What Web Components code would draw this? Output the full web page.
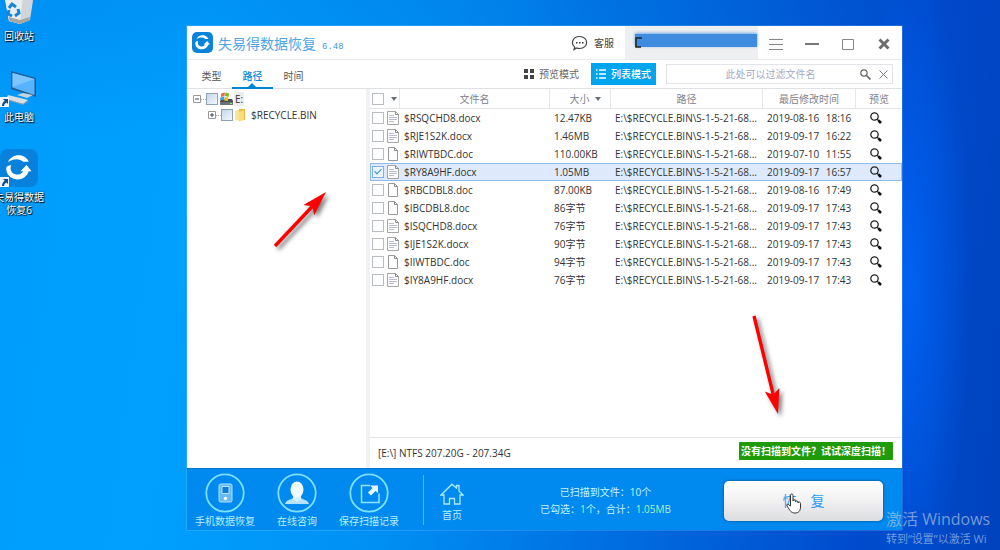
<!DOCTYPE html>
<html lang="zh-CN">
<head>
<meta charset="utf-8">
<title>失易得数据恢复</title>
<style>
html, body { margin: 0; height: 100%; overflow: hidden; }
body { font: 10px/18px "Open Sans", "Noto Sans CJK SC", sans-serif; color: #333; }
</style>
</head>
<body>
<desk-top>
  <desktop-icon kind="bin" style="top:-6px">回收站</desktop-icon>
  <desktop-icon kind="pc" style="top:69px">此电脑</desktop-icon>
  <desktop-icon kind="app" style="top:149px">失易得数据<br>恢复6</desktop-icon>
  <app-window>
    <title-bar slot="title"></title-bar>
    <tab-bar slot="tabs"></tab-bar>
    <list-tools slot="tools"></list-tools>
    <folder-tree slot="side"></folder-tree>
    <file-table slot="main"></file-table>
    <status-bar slot="main"></status-bar>
    <action-bar slot="foot"></action-bar>
  </app-window>
  <red-arrow style="left:264px;top:182px" x1="11" y1="64" x2="62" y2="10"></red-arrow>
  <red-arrow style="left:744px;top:306px" x1="10" y1="10" x2="34" y2="108"></red-arrow>
  <activation-note></activation-note>
</desk-top>
<script>
const define = (name, html, init) => customElements.define(name, class extends HTMLElement {
  constructor() {
    super();
    this.attachShadow({ mode: 'open' }).innerHTML = html;
  }
  connectedCallback() {
    if (init && !this.ready) { this.ready = true; init.call(this, this.shadowRoot); }
  }
});

const base = `<style>
*{box-sizing:border-box}
button,input{font:inherit;color:inherit;margin:0;padding:0;border:0;background:none;outline:0}
button{display:flex;align-items:center;justify-content:center}
svg{display:block;flex:none}
input[type=checkbox]{appearance:none;flex:none;display:block;width:12px;height:12px;border:1px solid #b9bcc0;background:#fff}
</style>`;

const logoRing = `<path d="M3.500 8.500C5.500 3.500 11 1 16.500 2.500c3 1 5 3 6 5.500h-5C14 4.500 8 5 3.500 8.500z"/><path d="M2 13.500C1.500 19 6 24 12 24c5 0 9-3 10.500-7.500H25L20.500 11 15 16.500h2.500C16 19 13.500 20 11 19.500 7 19 5 15.500 6.500 11 4 11.500 2.500 12 2 13.500z"/>`;

define('desk-top', base + `<style>
:host{display:block;position:relative;height:100%;overflow:hidden;
background:radial-gradient(ellipse 60px 330px at 91% 52%,rgba(0,105,255,.75),rgba(0,90,240,0)),
linear-gradient(180deg,rgba(0,60,190,.12),transparent 25%),
linear-gradient(98deg,#009cfc 0,#00a0ff 20%,#0090f4 42%,#0069de 67%,#004cce 86%,#0042bd 100%)}
</style><slot></slot>`);

const deskArt = {
  bin: `<svg width="38" height="32" viewBox="0 0 38 32"><path d="M4 0h30l-4 26-10 4-11-3z" fill="#cfd5d9"/><path d="M4 0h19l-3 30-11-3z" fill="#e8edf0"/><path d="M9 23l11 3 10-3-.5 3.500L20 30 9.500 27z" fill="#a9a5a0"/><g fill="none" stroke="#1685d6" stroke-width="3"><path d="M9 14l3-4 4 3"/><path d="M18 15l1 4-4 3"/><path d="M12 22l-4-2 1-4"/></g></svg>`,
  pc: `<svg width="38" height="38" viewBox="0 0 38 38"><path d="M11 2l25 7v19L11 20z" fill="#245b8d"/><path d="M12.500 4L34.500 10v16L12.500 18.500z" fill="#57b2ff"/><path d="M12.500 4L34.500 10 12.500 18z" fill="#7cc5ff"/><path d="M17 26l6-2 10 2-6 3z" fill="#c6d4dd"/><path d="M8 26l20 5-5 4-17-5z" fill="#d9dee2"/><path d="M6 30l17 5 5-3v1l-5 3-17-5z" fill="#8d9aa5"/></svg>`,
  app: `<svg width="38" height="38" viewBox="0 0 38 38"><rect width="38" height="38" rx="8" fill="#0781dc"/><g fill="#fff" transform="translate(4 4) scale(1.1)">${logoRing}</g></svg>`
};
define('desktop-icon', base + `<style>
:host{position:absolute;left:-8px;width:54px;display:flex;flex-direction:column;align-items:center;
color:#fff;line-height:13px;text-align:center;text-shadow:1px 1px 1px #000,0 0 2px #023}
.art{position:relative;margin-bottom:4px}
.short{position:absolute;left:0;bottom:0}
</style><div class="art"></div><div><slot></slot></div>`, function (root) {
  const kind = this.getAttribute('kind');
  const shortcut = kind === 'bin' ? '' : `<svg class="short" width="9" height="10" viewBox="0 0 9 10"><path d="M0 0h9v10H0z" fill="#eef5fb"/><path d="M3 2h5v5L6.500 5.500C5 6.500 4 7.500 4 9H2C2 6.500 3 5 4.700 3.700z" fill="#174b8e"/></svg>`;
  root.querySelector('.art').innerHTML = deskArt[kind] + shortcut;
});

define('app-window', base + `<style>
:host{position:absolute;left:187px;right:98px;top:26px;bottom:20px;display:flex;flex-direction:column;background:#fff;box-shadow:0 0 1px #bfeaff}
.bar{display:flex;flex:none;height:29px;border-bottom:1px solid #dfe1e4}
.bar ::slotted([slot=tools]){flex:1}
.body{flex:1;display:flex;min-height:0}
.side{flex:none;width:183px;border-right:4px solid #f0f1f3}
.main{flex:1;min-width:0;display:flex;flex-direction:column}
</style><slot name="title"></slot>
<div class="bar"><slot name="tabs"></slot><slot name="tools"></slot></div>
<div class="body"><div class="side"><slot name="side"></slot></div><div class="main"><slot name="main"></slot></div></div>
<slot name="foot"></slot>`);

define('title-bar', base + `<style>
:host{display:flex;flex:none;align-items:center;height:33px;border-bottom:1px solid #e9eaec;padding:0 0 0 5px}
h1{font:14px/20px "Noto Sans CJK SC",sans-serif;color:#4fa5e4;margin:0 0 0 5px}
.ver{font:9px/10px "Liberation Mono",monospace;color:#3d9be0;margin:8px 0 0 6px}
.help{margin-left:auto;gap:6px;color:#444}
.account{align-self:stretch;width:133px;margin-left:11px;background:#eeeff0;padding:8px 1px 0 10px}
.mask{position:relative;height:13px;background:#3f8be0;box-shadow:0 -1px 3px #6ea8e8}
.mask svg{position:absolute;left:0;top:3px}
.ctl{width:36px;height:32px;color:#777}
.ctl svg{margin-top:3px}
</style>
<svg width="21" height="21" viewBox="0 0 21 21"><rect width="21" height="21" rx="5" fill="#0a84d8"/><g fill="#fff" transform="translate(2 2) scale(.64)">${logoRing}</g></svg>
<h1>失易得数据恢复</h1><span class="ver">6.48</span>
<button class="help"><svg width="17" height="16" viewBox="0 0 17 16"><path d="M3.800 12.200C-.8 8.500 1.800 1.500 8.500 1.500c9.500 0 9.500 12 0 12-1 0-2-.2-2.700-.5L3 14.500z" fill="none" stroke="#444" stroke-width="1.200"/><path d="M5 7h1.500v1.500H5zM8 7h1.500v1.500H8zM11 7h1.500v1.500H11z" fill="#333"/></svg>客服</button>
<div class="account"><div class="mask"><svg width="8" height="11" viewBox="0 0 8 11"><path d="M7 1H1v9h5" fill="none" stroke="#222" stroke-width="1.500"/><path d="M2 2h6v6H2z" fill="#3f8be0"/></svg></div></div>
<button class="ctl" aria-label="菜单"><svg width="14" height="11" viewBox="0 0 14 11"><path d="M0 .5h14M0 5.500h14M0 10.500h14" stroke="#858585"/></svg></button>
<button class="ctl" aria-label="最小化"><svg width="14" height="10" viewBox="0 0 14 10"><path d="M0 5h14" stroke="#777" stroke-width="2"/></svg></button>
<button class="ctl" aria-label="最大化"><svg width="12" height="11" viewBox="0 0 12 11"><path d="M.5.500h11v10H.5z" fill="none" stroke="#888"/></svg></button>
<button class="ctl" aria-label="关闭"><svg width="12" height="12" viewBox="0 0 12 12"><path d="M1.500 1.500l9 9M10.500 1.500l-9 9" stroke="#6d6d6d" stroke-width="3"/></svg></button>`);

define('tab-bar', base + `<style>
:host{display:flex;flex:none;padding-left:4px}
button{position:relative;width:41px;height:29px;padding-top:2px;color:#555}
button[aria-selected=true]{color:#0086dc;font-weight:500;border-bottom:2px solid #0086cf;padding-top:4px}
button[aria-selected=true]::after{content:"";position:absolute;left:16px;bottom:0;border:4px solid transparent;border-top:0;border-bottom-color:#0086cf}
</style><button role="tab">类型</button><button role="tab" aria-selected="true">路径</button><button role="tab">时间</button>`);

define('list-tools', base + `<style>
:host{display:flex;align-items:center;justify-content:flex-end;padding-right:9px}
.mode{gap:5px;height:22px;color:#666}
.on{width:65px;margin:0 10px 0 12px;background:#00a5ee;color:#fff;font-weight:500}
.search{display:flex;align-items:center;width:227px;height:20px;border:1px solid #e2e4ea}
input{flex:1;min-width:0;height:18px;padding-left:18px;text-align:center}
input::placeholder{color:#a3aac6;opacity:1}
.search button{width:18px;height:18px}
</style>
<button class="mode"><svg width="10" height="10" viewBox="0 0 10 10"><path d="M0 0h4v4H0zM6 0h4v4H6zM0 6h4v4H0zM6 6h4v4H6z" fill="#444"/></svg>预览模式</button>
<button class="mode on"><svg width="10" height="10" viewBox="0 0 10 10"><path d="M3 1h7M3 5h7M3 9h7M0 1h1.500M0 5h1.500M0 9h1.500" stroke="#fff" stroke-width="1.300"/></svg>列表模式</button>
<div class="search"><input type="text" placeholder="此处可以过滤文件名" aria-label="过滤文件名">
<button aria-label="搜索"><svg width="11" height="11" viewBox="0 0 11 11"><circle cx="4" cy="4" r="3.200" fill="none" stroke="#666" stroke-width="1.200"/><path d="M6.500 6.500l4 4" stroke="#666" stroke-width="1.600"/></svg></button>
<button aria-label="清除"><svg width="9" height="9" viewBox="0 0 9 9"><path d="M.5.500l8 8M8.500.500l-8 8" stroke="#777"/></svg></button></div>`);

define('folder-tree', base + `<style>
:host{display:block;padding:2px 0 0 6px}
ul{list-style:none;margin:0;padding:0}
ul ul{padding-left:15px}
.row{display:flex;align-items:center;height:16px}
.exp{position:relative;width:8px;height:8px;margin-right:5px}
.exp::after{content:"";position:absolute;left:8px;top:4px;width:5px;border-top:1px dotted #aaa}
input[type=checkbox]{border-color:#8fa3b5;background:linear-gradient(135deg,#c4d6ea,#f4f8fc)}
label{display:flex;align-items:center;gap:1px}
.name{padding:0 1px;line-height:14px}
.cur{background:#ededee}
ul ul .name{margin-left:3px}
</style>
<ul><li><div class="row"><button class="exp" aria-label="收起"><svg width="8" height="8" viewBox="0 0 8 8"><path d="M.5.500h7v7h-7z" fill="#fff" stroke="#999"/><path d="M2 4h4" stroke="#445"/></svg></button>
<label><input type="checkbox"><svg width="14" height="14" viewBox="0 0 14 14"><path d="M2 8l3-1h8l1 2v4H1V9z" fill="#4c4f55"/><path d="M1 10h13v3H1z" fill="#6b7378"/><path d="M2 1.500L6 .5 5.500 4 2 5z" fill="#e8703c"/><path d="M6.500.500L10 1.500 9.500 5 6 4z" fill="#77b935"/><path d="M1.500 5.500l4-1L5 8H1z" fill="#39a0e5"/><path d="M6 5l3.500.700L9 9l-4-.5z" fill="#f5bb23"/><path d="M11 11h2v1h-2z" fill="#6f6"/></svg><span class="name cur">E:</span></label></div>
<ul><li><div class="row"><button class="exp" aria-label="展开"><svg width="8" height="8" viewBox="0 0 8 8"><path d="M.5.500h7v7h-7z" fill="#fff" stroke="#999"/><path d="M2 4h4M4 2v4" stroke="#445"/></svg></button>
<label><input type="checkbox"><svg width="12" height="14" viewBox="0 0 12 14"><path d="M1 3l5-2v12l-5-1z" fill="#fbe49a"/><path d="M5 1l6 0v11H6z" fill="#e9b83f"/><path d="M5 4l5-2v10l-5 1.500z" fill="#f8dc80"/></svg><span class="name">$RECYCLE.BIN</span></label></div></li></ul></li></ul>`);

const files = [
  ['$RSQCHD8.docx', '12.47KB', '2019-08-16', '18:16'],
  ['$RJE1S2K.docx', '1.46MB', '2019-09-17', '16:22'],
  ['$RIWTBDC.doc', '110.00KB', '2019-07-10', '11:55'],
  ['$RY8A9HF.docx', '1.05MB', '2019-09-17', '16:57', true],
  ['$RBCDBL8.doc', '87.00KB', '2019-08-16', '17:49'],
  ['$IBCDBL8.doc', '86字节', '2019-09-17', '17:43'],
  ['$ISQCHD8.docx', '76字节', '2019-09-17', '17:43'],
  ['$IJE1S2K.docx', '90字节', '2019-09-17', '17:43'],
  ['$IIWTBDC.doc', '94字节', '2019-09-17', '17:43'],
  ['$IY8A9HF.docx', '76字节', '2019-09-17', '17:43']
];
const docxIcon = `<svg width="12" height="14" viewBox="0 0 12 14"><path d="M.5.500h8l3 3v10H.5z" fill="#fdfdfd" stroke="#a6a6a6"/><path d="M8.500.500v3h3" fill="none" stroke="#888"/><path d="M2 4.500h5M2 6.500h8M2 8.500h8M2 10.500h5" stroke="#b9bccb"/></svg>`;
const docIcon = `<svg width="12" height="14" viewBox="0 0 12 14"><path d="M1.500.500h6l3 3v10h-9z" fill="#fdfdfd" stroke="#999"/><path d="M7.500.500v3h3" fill="none" stroke="#888"/></svg>`;
const glass = `<svg width="12" height="12" viewBox="0 0 12 12"><circle cx="4.500" cy="4.500" r="3.700" fill="none" stroke="#222" stroke-width="1.300"/><path d="M7.200 7.200l1.500 1.500" stroke="#222" stroke-width="1.400"/><path d="M8.500 8.500l2.500 2.500" stroke="#111" stroke-width="2.600"/></svg>`;

define('file-table', base + `<style>
:host{display:block;flex:1;min-height:0;overflow:hidden}
table{width:100%;border-collapse:separate;border-spacing:0;table-layout:fixed}
col.c{width:30px} col.s{width:61px} col.p{width:152px} col.t{width:93px} col.v{width:46px}
th{height:20px;padding:0;font-weight:400;color:#80838a;border-right:1px solid #e6e8ea;border-bottom:1px solid #e2e4e6;line-height:18px}
th:last-child{border-right:0}
td{height:18px;padding:0 0 0 4px;line-height:16px;white-space:nowrap;border:0 solid #8ebbea}
.pick{display:flex;align-items:center;gap:3px;padding-left:2px}
th .pick{gap:7px}
td.k{padding:0}
.tri{width:0;height:0;border:3px solid transparent;border-top:4px solid #687078;border-bottom:0}
th button{gap:5px;width:100%;padding-left:10px}
td button{width:100%}
td.g{padding:0;padding-right:6px}
time{margin-right:4px}
tr.sel td{background:#deeafb;border-width:1px 0}
tr.sel .pick{padding-left:1px}
tr.sel td:first-child{border-left-width:1px}
tr.sel td:last-child{border-right-width:1px;padding-right:5px}
input:checked{border-color:#7fb2e4;background:#eaf4fe;position:relative}
input:checked::after{content:"";position:absolute;left:3px;top:0;width:3px;height:6px;border:solid #3292e0;border-width:0 1px 1px 0;transform:rotate(45deg)}
</style>
<table><colgroup><col class="c"><col><col class="s"><col class="p"><col class="t"><col class="v"></colgroup>
<thead><tr><th><div class="pick"><input type="checkbox" aria-label="全选"><span class="tri"></span></div></th><th>文件名</th><th><button>大小<span class="tri"></span></button></th><th>路径</th><th>最后修改时间</th><th>预览</th></tr></thead><tbody></tbody></table>`, function (root) {
  root.querySelector('tbody').innerHTML = files.map(([name, size, day, hour, on]) => `<tr${on ? ' class="sel"' : ''}>
<td class="k"><div class="pick"><input type="checkbox" aria-label="${name}"${on ? ' checked' : ''}>${name.endsWith('x') ? docxIcon : docIcon}</div></td>
<td>${name}</td><td>${size}</td><td>E:\\$RECYCLE.BIN\\S-1-5-21-68...</td><td><time>${day}</time> ${hour}</td>
<td class="g"><button aria-label="预览 ${name}">${glass}</button></td></tr>`).join('');
});

define('status-bar', base + `<style>
:host{display:flex;flex:none;align-items:center;justify-content:space-between;height:30px;border-top:1px solid #e2e4e6;padding:0 9px 0 8px}
button{height:18px;width:154px;margin-bottom:4px;border-radius:1px;background:#1f9a08;color:#fff;font-weight:700;white-space:nowrap}
</style><span>[E:\\] NTFS 207.20G - 207.34G</span><button>没有扫描到文件？试试深度扫描！</button>`);

define('action-bar', base + `<style>
:host{display:flex;flex:none;height:61px;background:#0089ef;border-top:1px solid #0679cc;color:#b5efff;padding:0 19px 0 2px}
.act{flex:none;flex-direction:column;justify-content:flex-start;width:72px;padding-top:4px;line-height:16px}
.home{width:56px;padding-top:14px;line-height:20px}
.sep{flex:none;width:1px;height:50px;margin:6px 0 0 18px;background:#4fb8f8}
.stats{flex:1;padding:15px 0 0 7px;text-align:center;line-height:17px;color:#c4f4ff}
.stats div{white-space:nowrap}
b{font-weight:400;color:#a8efc4}
.go{position:relative;flex:none;width:159px;height:40px;margin-top:12px;border-radius:5px;background:linear-gradient(#fff,#f4f4f5 40%,#dcdde0);box-shadow:0 0 2px 1px #0669b5;font-size:14px;color:#2f9bee}
.go svg{position:absolute;left:62px;top:12px}
</style>
<button class="act"><svg width="40" height="40" viewBox="0 0 40 40"><circle cx="20" cy="20" r="18.700" fill="none" stroke="#7fe0fd" stroke-width="1.800"/><rect x="14" y="11" width="13" height="18" rx="1.500" fill="#6ab8f5" stroke="#a6e6ff"/><path d="M17 13.500h7v7h-7z" fill="#0e7fd8" stroke="#d3f4ff" stroke-width=".8"/><circle cx="20.500" cy="25.500" r="1.700" fill="#fff"/></svg>手机数据恢复</button>
<button class="act"><svg width="40" height="40" viewBox="0 0 40 40"><circle cx="20" cy="20" r="18.700" fill="none" stroke="#7fe0fd" stroke-width="1.800"/><path d="M8 31c1-4 5-4 8-6h8c3 2 7 2 8 6z" fill="#b5e2ff"/><path d="M16 23h8v3l-4 3-4-3z" fill="#d8f1ff"/><ellipse cx="20" cy="16.500" rx="6.500" ry="8" fill="#f0faff"/></svg>在线咨询</button>
<button class="act"><svg width="40" height="40" viewBox="0 0 40 40"><circle cx="20" cy="20" r="18.700" fill="none" stroke="#7fe0fd" stroke-width="1.800"/><path d="M21 12.500h-8.500v17H30v-9" fill="none" stroke="#8fe6ff" stroke-width="1.500"/><path d="M21 12.500h8V20l-2.500-2-4.500 4.500-3-3 4.500-4.500z" fill="#e6f9ff"/></svg>保存扫描记录</button>
<div class="sep"></div>
<button class="act home"><svg width="24" height="22" viewBox="0 0 24 22"><path d="M12 1.200L16.500 5V2.500h2.500V8l4 4h-3v9h-5.500v-5.500h-5V21H4v-9H1z" fill="none" stroke="#a8ecff" stroke-width="1.300"/></svg>首页</button>
<div class="stats"><div>已扫描到文件：10个</div><div>已勾选：<b>1</b>个，合计：<b>1.05MB</b></div></div>
<button class="go">恢　复<svg width="16" height="21" viewBox="0 0 16 21"><path d="M4.500 13V2.500C4.500.500 7 .5 7 2.500V8c0-1.500 2.500-1.500 2.500 0V9c0-1.500 2.500-1.500 2.500 0v1c0-1.500 2.500-1.300 2.500.5V14c0 4-2 6-5.500 6-4 0-4.500-2-8-7-.7-1.500 1-2.500 2-1z" fill="#fff" stroke="#333"/></svg></button>`);

define('red-arrow', base + `<style>
:host{position:absolute;display:block;pointer-events:none}
svg{overflow:visible;filter:drop-shadow(3px 3px 2px rgba(0,0,0,.5))}
</style><svg width="70" height="120"><g fill="#fe0000"></g></svg>`, function (root) {
  const [x1, y1, x2, y2] = ['x1', 'y1', 'x2', 'y2'].map(a => +this.getAttribute(a));
  const len = Math.hypot(x2 - x1, y2 - y1), turn = Math.atan2(y2 - y1, x2 - x1) * 180 / Math.PI;
  root.querySelector('g').innerHTML = `<path transform="translate(${x1} ${y1}) rotate(${turn})" d="M0-1.700H${len - 21}L${len - 25}-7.500 ${len} 0 ${len - 25} 7.500 ${len - 21} 1.700H0z"/>`;
});

define('activation-note', base + `<style>
:host{position:absolute;left:886px;right:0;bottom:3px;overflow:hidden;white-space:nowrap;color:rgba(176,196,224,.68);font:11px/16px "Open Sans","Noto Sans CJK SC",sans-serif;pointer-events:none}
.big{font-size:16px;line-height:24px}
</style><div class="big">激活 Windows</div><div>转到“设置”以激活 Wi</div>`);
</script>
</body>
</html>
